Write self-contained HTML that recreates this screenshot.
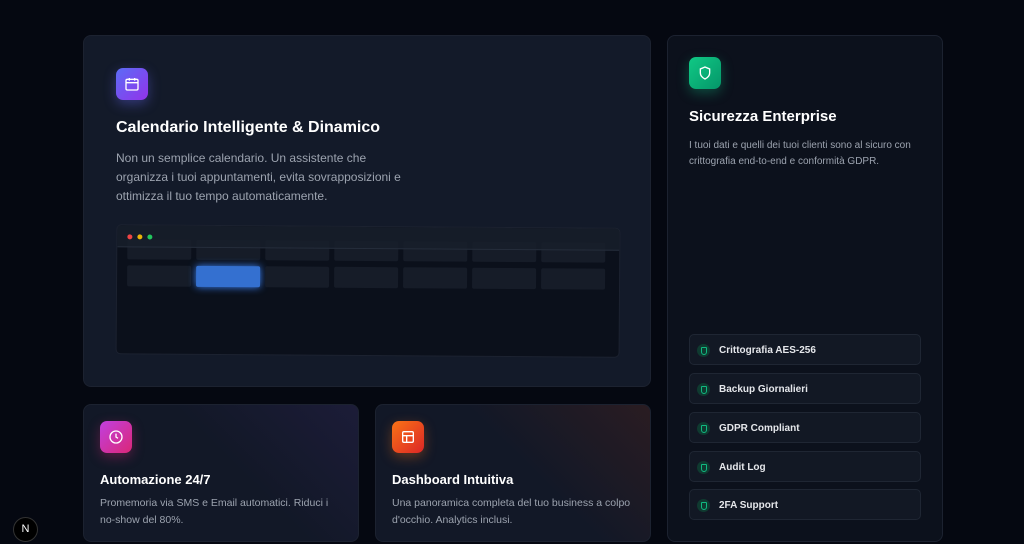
<!DOCTYPE html>
<html><head><meta charset="utf-8"><style>
*{box-sizing:border-box;margin:0;padding:0}
body{width:1024px;height:544px;overflow:hidden;background:#050811;font-family:"Liberation Sans",sans-serif;position:relative}
.card{position:absolute;border:1px solid #1c2230;border-radius:8px;background:#111827}
.ic{position:absolute;width:32px;height:32px;border-radius:7px;display:flex;align-items:center;justify-content:center}
h3{position:absolute;color:#fff;font-weight:bold;white-space:nowrap}
p{position:absolute;color:#9ca3af}
.item{position:absolute;left:21px;width:232px;height:31px;border:1px solid #1f2633;border-radius:5px;background:#121824;color:#e5e7eb;font-size:10px;font-weight:bold;padding-left:29px;line-height:31px}
.item::before{content:"";position:absolute;left:7px;top:9px;width:13px;height:13px;border-radius:50%;background:#0f3a30}
.item::after{content:"";position:absolute;left:11px;top:12px;width:4px;height:6px;border:1px solid #10b981;border-radius:1px 1px 3px 3px}
.cell{position:absolute;height:21px;width:64px;background:#161c28;border-radius:2px}
</style></head><body>
<div class="card" style="left:83px;top:35px;width:568px;height:352px;background:#131a29">
 <div class="ic" style="left:32px;top:32px;background:linear-gradient(135deg,#5b6cf6,#9333ea);box-shadow:0 4px 12px rgba(99,102,241,.4)">
  <svg width="16" height="16" viewBox="0 0 24 24" fill="none" stroke="#fff" stroke-width="2"><rect x="3" y="5" width="18" height="16" rx="2"/><path d="M8 3v4M16 3v4M3 10h18"/></svg></div>
 <h3 style="left:32px;top:83px;font-size:16px">Calendario Intelligente &amp; Dinamico</h3>
 <p style="left:32px;top:113px;width:300px;font-size:12px;line-height:19px">Non un semplice calendario. Un assistente che organizza i tuoi appuntamenti, evita sovrapposizioni e ottimizza il tuo tempo automaticamente.</p>
 <div style="position:absolute;left:32px;top:190px;width:504px;height:130px;background:#0b101b;border:1px solid #1c2230;border-radius:5px;transform:rotate(0.4deg);overflow:hidden">
  <div class="cell" style="left:10px;top:14px;height:20px"></div><div class="cell" style="left:79px;top:14px;height:20px"></div>
  <div class="cell" style="left:148px;top:14px;height:20px"></div><div class="cell" style="left:217px;top:14px;height:20px"></div>
  <div class="cell" style="left:286px;top:14px;height:20px"></div><div class="cell" style="left:355px;top:14px;height:20px"></div><div class="cell" style="left:424px;top:14px;height:20px"></div>
  <div style="position:absolute;left:0;top:0;width:100%;height:22px;background:rgba(24,30,42,.85);border-bottom:1px solid #252d3b"></div>
  <div style="position:absolute;left:10px;top:9px;width:5px;height:5px;border-radius:50%;background:#ef4444"></div>
  <div style="position:absolute;left:20px;top:9px;width:5px;height:5px;border-radius:50%;background:#eab308"></div>
  <div style="position:absolute;left:30px;top:9px;width:5px;height:5px;border-radius:50%;background:#22c55e"></div>
  <div class="cell" style="left:10px;top:40px"></div>
  <div class="cell" style="left:79px;top:40px;background:#3470d0;box-shadow:0 0 8px #3b82f6"></div>
  <div class="cell" style="left:148px;top:40px"></div><div class="cell" style="left:217px;top:40px"></div>
  <div class="cell" style="left:286px;top:40px"></div><div class="cell" style="left:355px;top:40px"></div><div class="cell" style="left:424px;top:40px"></div>
 </div>
</div>
<div class="card" style="left:667px;top:35px;width:276px;height:507px;background:#0c111c">
 <div class="ic" style="left:21px;top:21px;background:linear-gradient(135deg,#10c985,#059669);box-shadow:0 4px 12px rgba(16,185,129,.35)">
  <svg width="16" height="16" viewBox="0 0 24 24" fill="none" stroke="#fff" stroke-width="2"><path d="M12 3l7 3v6c0 4-3 7-7 9-4-2-7-5-7-9V6z"/></svg></div>
 <h3 style="left:21px;top:72px;font-size:15px">Sicurezza Enterprise</h3>
 <p style="left:21px;top:102px;width:222px;font-size:10px;line-height:16px">I tuoi dati e quelli dei tuoi clienti sono al sicuro con crittografia end-to-end e conformità GDPR.</p>
 <div class="item" style="top:298px">Crittografia AES-256</div>
 <div class="item" style="top:337px">Backup Giornalieri</div>
 <div class="item" style="top:376px">GDPR Compliant</div>
 <div class="item" style="top:415px">Audit Log</div>
 <div class="item" style="top:453px">2FA Support</div>
</div>
<div class="card" style="left:83px;top:404px;width:276px;height:138px;background:linear-gradient(225deg,#1c1c38,#121827 45%)">
 <div class="ic" style="left:16px;top:16px;background:linear-gradient(135deg,#c040e0,#db2777);box-shadow:0 4px 12px rgba(219,39,119,.35)">
  <svg width="16" height="16" viewBox="0 0 24 24" fill="none" stroke="#fff" stroke-width="2"><circle cx="12" cy="12" r="9"/><path d="M12 7v5l3 2"/></svg></div>
 <h3 style="left:16px;top:67px;font-size:13px">Automazione 24/7</h3>
 <p style="left:16px;top:90px;width:236px;font-size:10.5px;line-height:17px">Promemoria via SMS e Email automatici. Riduci i no-show del 80%.</p>
</div>
<div class="card" style="left:375px;top:404px;width:276px;height:138px;background:linear-gradient(225deg,#2a1c22,#121827 45%)">
 <div class="ic" style="left:16px;top:16px;background:linear-gradient(135deg,#f97316,#dc2626);box-shadow:0 4px 12px rgba(249,115,22,.35)">
  <svg width="16" height="16" viewBox="0 0 24 24" fill="none" stroke="#fff" stroke-width="2"><rect x="4" y="4" width="16" height="16" rx="2"/><path d="M4 10h16M10 10v10"/></svg></div>
 <h3 style="left:16px;top:67px;font-size:13px">Dashboard Intuitiva</h3>
 <p style="left:16px;top:90px;width:250px;font-size:10.5px;line-height:17px">Una panoramica completa del tuo business a colpo d'occhio. Analytics inclusi.</p>
</div>
<div style="position:absolute;left:13px;top:517px;width:25px;height:25px;border-radius:50%;background:#000;border:1px solid #333;color:#fff;font-size:11px;text-align:center;line-height:23px">N</div>
</body></html>
